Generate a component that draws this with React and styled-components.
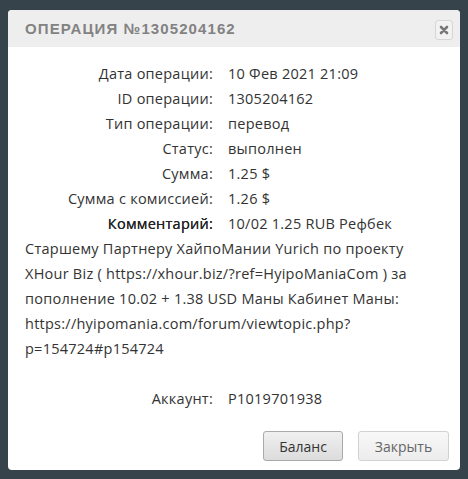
import React from 'react';
import styled, { createGlobalStyle } from 'styled-components';

const GlobalStyle = createGlobalStyle`
  html, body {
    margin: 0;
    padding: 0;
    background: #36434b;
  }
  body {
    font-family: "Open Sans", "Liberation Sans", sans-serif;
  }
`;

const Page = styled.div`
  width: 468px;
  height: 479px;
  padding: 10px 8px 0;
  box-sizing: border-box;
`;

const Dialog = styled.div`
  width: 452px;
  background: #fff;
  border-radius: 4px;
  overflow: hidden;
`;

const Header = styled.div`
  height: 37px;
  background: #eeeeee;
  display: flex;
  align-items: center;
  justify-content: space-between;
  padding: 0 7px 0 17px;
`;

const Title = styled.div`
  font-family: "Liberation Sans", sans-serif;
  font-size: 15px;
  font-weight: 700;
  letter-spacing: 1.1px;
  color: #828282;
  text-transform: uppercase;
`;

const CloseButton = styled.button`
  width: 18px;
  height: 20px;
  padding: 0;
  border: 1px solid #d6d6d6;
  border-radius: 3px;
  background: #f2f2f2;
  display: flex;
  align-items: center;
  justify-content: center;
  margin-top: 2px;
`;

const Body = styled.div`
  padding: 14px 17px 0;
  font-size: 14.5px;
  letter-spacing: 0.25px;
  color: #333;
  line-height: 25px;
`;

const Grid = styled.div`
  display: grid;
  grid-template-columns: 188px 1fr;
  column-gap: 15px;
`;

const Label = styled.div`
  text-align: right;
`;

const Value = styled.div``;

const Comment = styled.div``;

const InlineLabel = styled.span`
  display: inline-block;
  width: 188px;
  margin-right: 15px;
  text-align: right;
  color: #222;
  text-shadow: 0 0 0.3px #222;
`;

const AccountRow = styled(Grid)`
  margin-top: 25px;
`;

const Footer = styled.div`
  display: flex;
  justify-content: flex-end;
  gap: 15px;
  padding: 20px 11px 9px;
`;

const Button = styled.button`
  height: 30px;
  width: ${p => p.$w}px;
  border-radius: 3px;
  font-family: "Open Sans", "Liberation Sans", sans-serif;
  font-size: 14px;
  padding: 0;
  color: ${p => (p.$primary ? '#333' : '#666')};
  border: 1px solid ${p => (p.$primary ? '#a9a9a9' : '#d2d2d2')};
  background: ${p =>
    p.$primary
      ? 'linear-gradient(#f0f0f0, #dcdcdc)'
      : 'linear-gradient(#f8f8f8, #ececec)'};
`;

const rows = [
  ['Дата операции:', '10 Фев 2021 21:09'],
  ['ID операции:', '1305204162'],
  ['Тип операции:', 'перевод'],
  ['Статус:', 'выполнен'],
  ['Сумма:', '1.25 $'],
  ['Сумма с комиссией:', '1.26 $'],
];

export default function App() {
  return (
    <Page>
      <GlobalStyle />
      <Dialog>
        <Header>
          <Title>Операция №1305204162</Title>
          <CloseButton aria-label="close">
            <svg width="10" height="10" viewBox="0 0 10 10">
              <path d="M2 2 L8 8 M8 2 L2 8" stroke="#777" strokeWidth="2.6" strokeLinecap="round" />
            </svg>
          </CloseButton>
        </Header>
        <Body>
          <Grid>
            {rows.map(([l, v]) => (
              <React.Fragment key={l}>
                <Label>{l}</Label>
                <Value>{v}</Value>
              </React.Fragment>
            ))}
          </Grid>
          <Comment>
            <InlineLabel>Комментарий:</InlineLabel>
            10/02 1.25 RUB Рефбек Старшему Партнеру ХайпоМании Yurich по проекту XHour Biz ( https://xhour.biz/?ref=HyipoManiaCom ) за пополнение 10.02 + 1.38 USD Маны Кабинет Маны: https://hyipomania.com/forum/viewtopic.php?p=154724#p154724
          </Comment>
          <AccountRow>
            <Label>Аккаунт:</Label>
            <Value>P1019701938</Value>
          </AccountRow>
        </Body>
        <Footer>
          <Button $primary $w={80}>Баланс</Button>
          <Button $w={91}>Закрыть</Button>
        </Footer>
      </Dialog>
    </Page>
  );
}
